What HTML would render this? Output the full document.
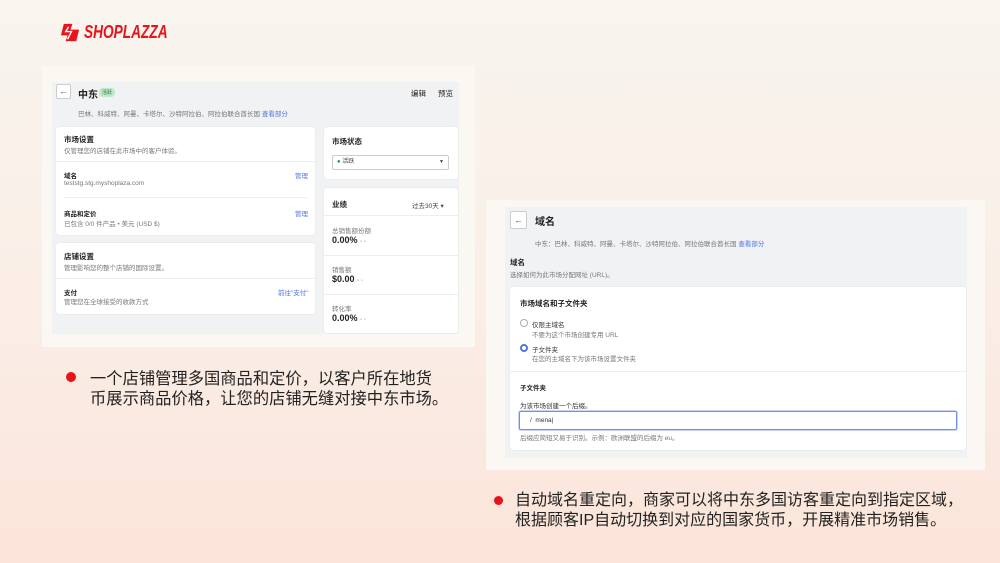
<!DOCTYPE html>
<html><head><meta charset="utf-8"><style>
*{margin:0;padding:0;box-sizing:border-box}
body{width:1000px;height:563px;overflow:hidden;position:relative;font-family:"Liberation Sans","Noto Sans CJK SC",sans-serif;background:linear-gradient(180deg,#f8f4ee 0%,#faeee6 55%,#fbe4d9 100%);color:#222}
.a{position:absolute;white-space:nowrap}
.s{font-size:6.5px;color:#777}
.t{font-size:7.5px;color:#222;font-weight:bold}
.lnk{color:#4f74e6}
.card{position:absolute;background:#fff;border-radius:3px;box-shadow:0 0 1px rgba(0,0,0,.15)}
.hr{position:absolute;height:1px;background:#eceef0}
</style></head><body>
<!-- logo -->
<svg class="a" style="left:60px;top:22px" width="21" height="21" viewBox="0 0 22 22"><path d="M4 2h9l-2 6h9l-3 12H6l2-6H1z" fill="#e8141b"/><path d="M9 5l-3 5h6l-4 8" stroke="#fff" stroke-width="1.5" fill="none"/></svg>
<div class="a" style="left:84px;top:22px;font-size:18px;font-weight:bold;font-style:italic;color:#e8141b;transform:scaleX(0.76);transform-origin:0 0">SHOPLAZZA</div>

<!-- left screenshot -->
<div class="a" style="left:42px;top:66px;width:433px;height:281px;background:#fbf7f2"></div>
<div class="a" style="left:52px;top:82px;width:407px;height:252px;background:#f1f2f4"></div>
<div class="a" style="left:56px;top:84px;width:15px;height:15px;border:1px solid #ccc;border-radius:2px;background:#fff;font-size:9px;text-align:center;line-height:13px;color:#555">←</div>
<div class="a" style="left:78px;top:86px;font-size:10px;font-weight:bold">中东</div>
<div class="a" style="left:99px;top:88px;font-size:5px;background:#bfe8c9;color:#2a7a3f;border-radius:4px;padding:1px 3px">活跃</div>
<div class="a t" style="left:411px;top:88px;font-weight:normal">编辑</div>
<div class="a t" style="left:438px;top:88px;font-weight:normal">预览</div>
<div class="a s" style="left:78px;top:108px">巴林、科威特、阿曼、卡塔尔、沙特阿拉伯、阿拉伯联合酋长国 <span class="lnk">查看部分</span></div>

<div class="card" style="left:56px;top:127px;width:259px;height:108px"></div>
<div class="a t" style="left:64px;top:134px">市场设置</div>
<div class="a s" style="left:64px;top:145px">仅管理您的店铺在此市场中的客户体验。</div>
<div class="hr" style="left:56px;top:161px;width:259px"></div>
<div class="a t" style="left:64px;top:170px;font-size:6.5px">域名</div>
<div class="a s lnk" style="left:295px;top:170px">管理</div>
<div class="a s" style="left:64px;top:180px">teststg.stg.myshoplaza.com</div>
<div class="hr" style="left:64px;top:197px;width:243px"></div>
<div class="a t" style="left:64px;top:208px;font-size:6.5px">商品和定价</div>
<div class="a s lnk" style="left:295px;top:208px">管理</div>
<div class="a s" style="left:64px;top:218px">已包含 0/0 件产品 • 美元 (USD $)</div>

<div class="card" style="left:56px;top:243px;width:259px;height:71px"></div>
<div class="a t" style="left:64px;top:251px">店铺设置</div>
<div class="a s" style="left:64px;top:262px">管理影响您的整个店铺的国际设置。</div>
<div class="hr" style="left:56px;top:278px;width:259px"></div>
<div class="a t" style="left:64px;top:287px;font-size:6.5px">支付</div>
<div class="a s lnk" style="left:278px;top:287px">前往"支付"</div>
<div class="a s" style="left:64px;top:296px">管理您在全球接受的收款方式</div>

<div class="card" style="left:324px;top:127px;width:134px;height:52px"></div>
<div class="a t" style="left:332px;top:136px">市场状态</div>
<div class="a" style="left:332px;top:155px;width:117px;height:15px;border:1px solid #ccc;border-radius:2px;font-size:6px;line-height:13px;padding-left:4px;color:#444"><span style="color:#2a8a4a">●</span> 活跃<span style="position:absolute;right:4px;font-size:5px">▼</span></div>

<div class="card" style="left:324px;top:188px;width:134px;height:145px"></div>
<div class="a t" style="left:332px;top:199px">业绩</div>
<div class="a s" style="left:412px;top:200px;color:#444">过去30天 ▾</div>
<div class="hr" style="left:324px;top:215px;width:134px"></div>
<div class="a s" style="left:332px;top:225px">总销售额份额</div>
<div class="a" style="left:332px;top:235px;font-size:9px;font-weight:bold">0.00% <span style="color:#aaa;font-size:6px">- -</span></div>
<div class="hr" style="left:324px;top:255px;width:134px"></div>
<div class="a s" style="left:332px;top:264px">销售额</div>
<div class="a" style="left:332px;top:274px;font-size:9px;font-weight:bold">$0.00 <span style="color:#aaa;font-size:6px">- -</span></div>
<div class="hr" style="left:324px;top:294px;width:134px"></div>
<div class="a s" style="left:332px;top:303px">转化率</div>
<div class="a" style="left:332px;top:313px;font-size:9px;font-weight:bold">0.00% <span style="color:#aaa;font-size:6px">- -</span></div>

<!-- right screenshot -->
<div class="a" style="left:486px;top:200px;width:499px;height:270px;background:#fbf7f2"></div>
<div class="a" style="left:505px;top:207px;width:462px;height:251px;background:#f1f2f4"></div>
<div class="a" style="left:510px;top:211px;width:17px;height:18px;border:1px solid #ccc;border-radius:2px;background:#fff;font-size:9px;text-align:center;line-height:16px;color:#555">←</div>
<div class="a" style="left:535px;top:213px;font-size:10px;font-weight:bold">域名</div>
<div class="a s" style="left:535px;top:238px">中东：巴林、科威特、阿曼、卡塔尔、沙特阿拉伯、阿拉伯联合酋长国 <span class="lnk">查看部分</span></div>
<div class="a t" style="left:510px;top:257px">域名</div>
<div class="a s" style="left:510px;top:269px">选择如何为此市场分配网址 (URL)。</div>
<div class="card" style="left:510px;top:287px;width:456px;height:163px"></div>
<div class="a t" style="left:520px;top:298px">市场域名和子文件夹</div>
<div class="a" style="left:520px;top:319px;width:8px;height:8px;border:1px solid #aaa;border-radius:50%;background:#fff"></div>
<div class="a s" style="left:532px;top:319px;color:#333">仅限主域名</div>
<div class="a s" style="left:532px;top:329px">不要为这个市场创建专用 URL</div>
<div class="a" style="left:520px;top:344px;width:8px;height:8px;border:2.5px solid #4f74e6;border-radius:50%;background:#fff"></div>
<div class="a s" style="left:532px;top:344px;color:#333">子文件夹</div>
<div class="a s" style="left:532px;top:353px">在您的主域名下为该市场设置文件夹</div>
<div class="hr" style="left:510px;top:371px;width:456px"></div>
<div class="a t" style="left:520px;top:382px;font-size:6.5px">子文件夹</div>
<div class="a s" style="left:520px;top:400px;color:#333">为该市场创建一个后缀。</div>
<div class="a" style="left:519px;top:411px;width:438px;height:19px;border:1px solid #6f8fec;border-radius:2px;box-shadow:0 0 0 1px #c8d4fa;font-size:6.5px;line-height:17px;padding-left:10px;color:#333">/ &nbsp;mena|</div>
<div class="a s" style="left:520px;top:432px">后缀应简短又易于识别。示例：欧洲联盟的后缀为 eu。</div>

<!-- bullets -->
<div class="a" style="left:66px;top:372px;width:10px;height:10px;border-radius:50%;background:#e8141b"></div>
<div class="a" style="left:90px;top:369px;font-size:16.3px;line-height:20px;color:#222">一个店铺管理多国商品和定价，以客户所在地货<br>币展示商品价格，让您的店铺无缝对接中东市场。</div>
<div class="a" style="left:494px;top:496px;width:9px;height:9px;border-radius:50%;background:#e8141b"></div>
<div class="a" style="left:515px;top:491px;font-size:16px;line-height:20px;color:#222">自动域名重定向，商家可以将中东多国访客重定向到指定区域，<br>根据顾客IP自动切换到对应的国家货币，开展精准市场销售。</div>
</body></html>
